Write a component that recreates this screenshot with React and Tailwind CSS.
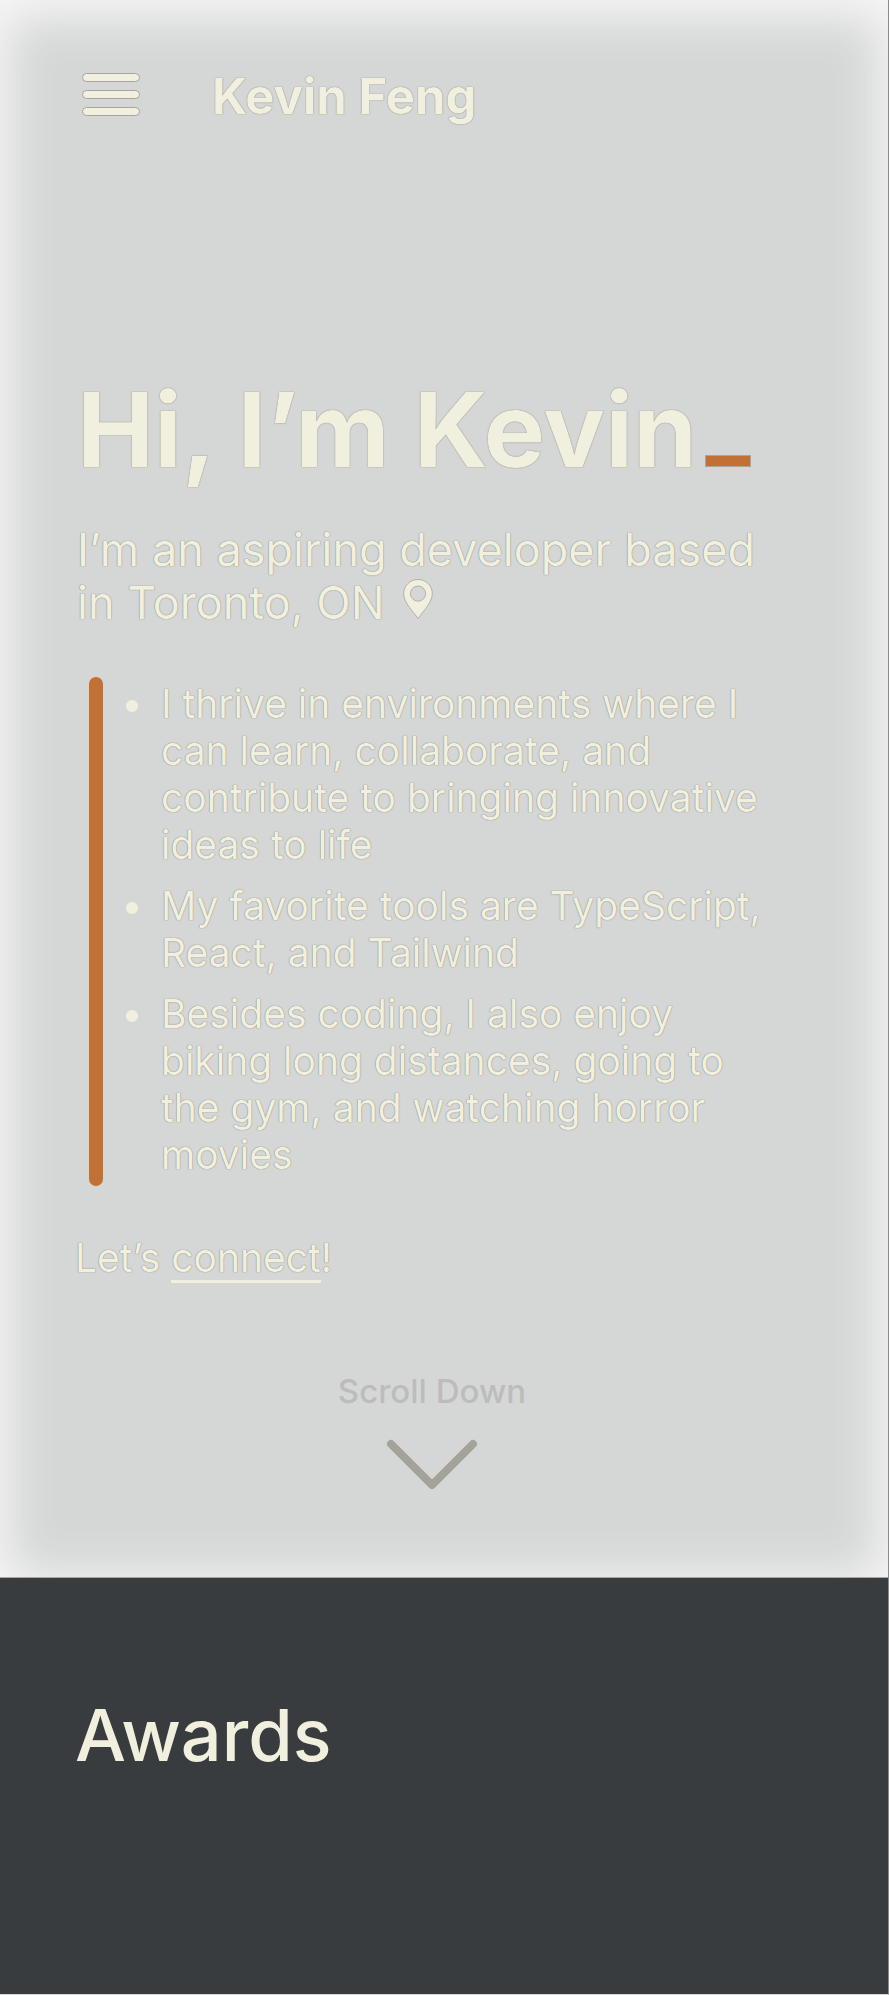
const TEXT_EDGE = "[text-shadow:0_0_1px_#777770,0_0_1px_#77777080]";

const facts = [
  "I thrive in environments where I can learn, collaborate, and contribute to bringing innovative ideas to life",
  "My favorite tools are TypeScript, React, and Tailwind",
  "Besides coding, I also enjoy biking long distances, going to the gym, and watching horror movies",
];

function MenuButton() {
  return (
    <button type="button" aria-label="Open menu" className="flex flex-col gap-2">
      <span className="h-[9px] w-[58px] rounded-full border border-[#a5a59e] bg-[#f1f0df]" />
      <span className="h-[9px] w-[58px] rounded-full border border-[#a5a59e] bg-[#f1f0df]" />
      <span className="h-[9px] w-[58px] rounded-full border border-[#a5a59e] bg-[#f1f0df]" />
    </button>
  );
}

function Pin() {
  return (
    <svg viewBox="0 0 30 40" className="ml-[18px] inline-block h-10 w-[30px] align-baseline" aria-hidden="true">
      <path
        fillRule="evenodd"
        d="M15 .5C7 .5.7 6.700.7 14.500c0 9 8.300 16.500 14.300 25 6-8.500 14.300-16 14.300-25C29.300 6.700 23 .5 15 .5Zm0 6.500a7.600 7.600 0 1 1 0 15.200A7.600 7.600 0 0 1 15 7Z"
        fill="#f1f0df"
        stroke="#a5a59e"
        strokeWidth="0.8"
      />
    </svg>
  );
}

export default function App() {
  return (
    <div className="flex min-h-screen flex-col border-r border-b border-r-[#8b8b8b] border-b-[#d8d8d8] bg-[#383c3f] font-['Inter',sans-serif] text-[#f1f0df]">
      <div className="border-b border-[#a4a5a6] bg-[#d5d7d6] shadow-[inset_0_8px_48px_8px_#f7f7f7]">
        <header className={`flex items-start gap-[72px] px-[82px] pt-[68px] ${TEXT_EDGE}`}>
          <div className="pt-[5px]">
            <MenuButton />
          </div>
          <p className="text-[49px] leading-[58px] font-bold">Kevin Feng</p>
        </header>

        <main className={`px-[77px] pt-[240px] ${TEXT_EDGE}`}>
          <h1 className="flex items-baseline gap-2 text-[103px] leading-[128px] font-bold whitespace-nowrap">
            Hi, I’m Kevin
            <span className="h-3 w-[46px] border border-[#a9a59e] bg-[#c27033]" />
          </h1>
          <p className="mt-[29px] max-w-[690px] text-[45px] leading-[53px]">
            I’m an aspiring developer based in Toronto, ON
            <Pin />
          </p>

          <div className="mt-12 flex gap-[58px] pl-3">
            <div className="w-[14px] shrink-0 rounded-full bg-[#c27033]" />
            <ul className="flex max-w-[610px] flex-col gap-[14px] pt-[3px] pb-2 text-[39px] leading-[47px]">
              {facts.map((fact) => (
                <li key={fact} className="relative">
                  <span className="absolute top-5 -left-[35px] size-3 rounded-full bg-[#f1f0df]" />
                  {fact}
                </li>
              ))}
            </ul>
          </div>

          <p className="mt-12 -ml-[2px] text-[39px] leading-[47px]">
            Let’s{" "}
            <a href="#connect" className="inline-block border-b-[3px] border-[#f1f0df] leading-[44px]">
              connect
            </a>
            !
          </p>
        </main>

        <div className="flex flex-col items-center pt-[86px] pr-6 pb-[86px]">
          <p className="text-[33px] leading-[44px] font-medium text-[#bcbcba]">Scroll Down</p>
          <svg viewBox="0 0 92 52" className="mt-[26px] h-[52px] w-[92px]" fill="none" aria-hidden="true">
            <path d="M5 5 46 46 87 5" stroke="#a3a399" strokeWidth="8" strokeLinecap="round" strokeLinejoin="round" />
          </svg>
        </div>
      </div>

      <section className="grow px-[75px] pt-[112px]">
        <h2 className="text-[72px] leading-[90px] font-medium">Awards</h2>
      </section>
    </div>
  );
}
